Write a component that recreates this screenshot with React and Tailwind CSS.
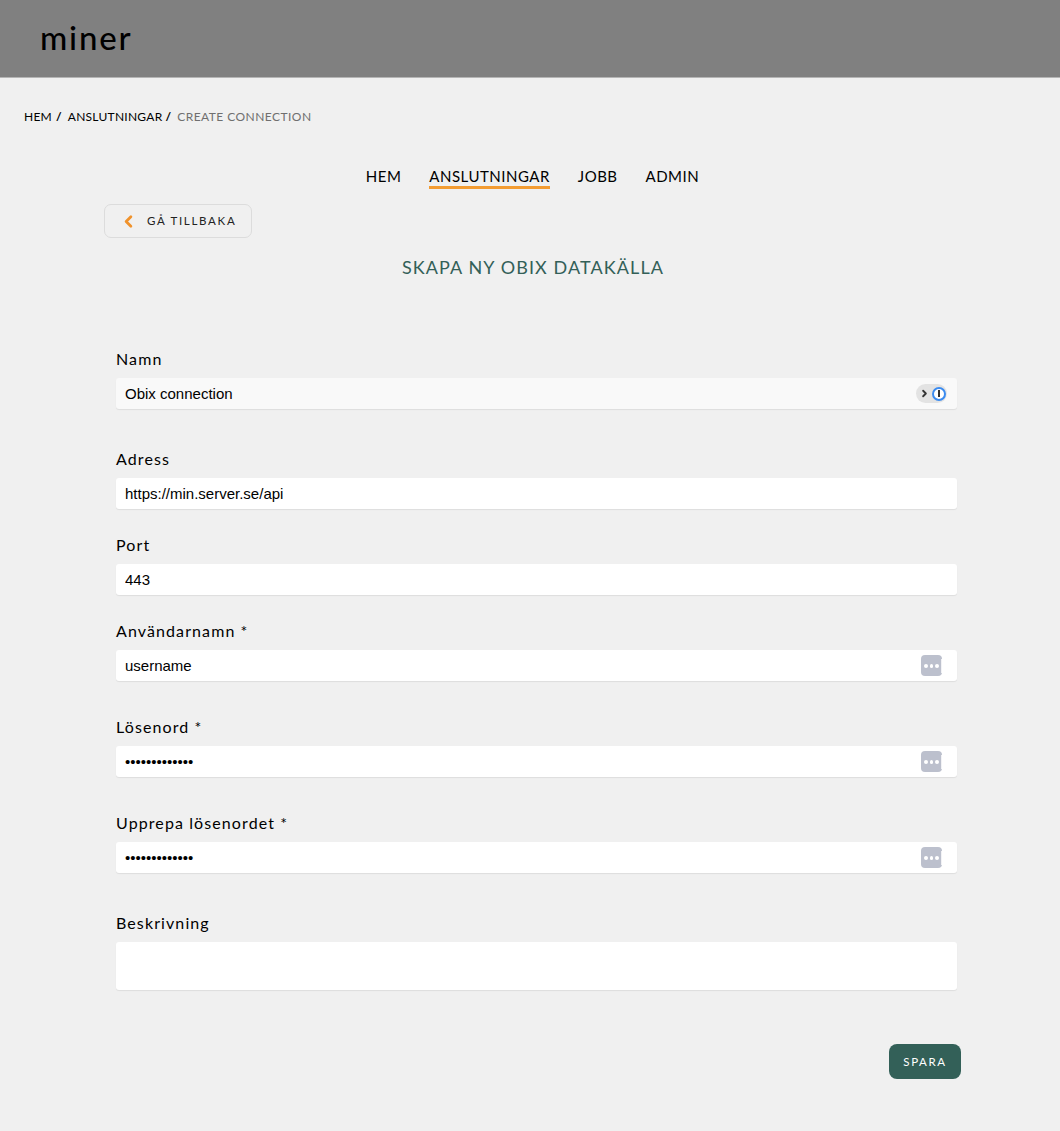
import { ChevronLeft, ChevronRight } from 'lucide-react'

const sans = "font-['Lato','Noto_Sans',sans-serif]"

function PasswordKey() {
  return (
    <span className="absolute right-[15px] top-[5px] flex h-[21px] w-[21px] items-center gap-[2px] rounded-[4px] bg-[#bcc0cd] pl-[3px]">
      <span className="h-1 w-1 rounded-full bg-white" />
      <span className="h-1 w-1 rounded-full bg-white" />
      <span className="h-1 w-1 rounded-full bg-white" />
      <span className="h-[14px] w-[1px] bg-white/80" />
    </span>
  )
}

function OnePassword() {
  return (
    <span className="absolute right-[10px] top-[6px] flex h-[19px] w-[31px] items-center rounded-full bg-[#e3e3e3] pl-[3px]">
      <ChevronRight size={11} strokeWidth={4} className="text-[#333]" />
      <span className="ml-[2px] flex h-[14px] w-[14px] items-center justify-center rounded-full border-2 border-[#3b8bf0] bg-white">
        <span className="h-[7px] w-[2px] bg-[#333]" />
      </span>
    </span>
  )
}

function Field({ label, value, type = 'text', filled, keyIcon, onePass, className }) {
  return (
    <div className={className}>
      <label className="block h-[18px] text-[16px] leading-4 tracking-[1.1px] text-black">{label}</label>
      <div className="relative mt-[9px]">
        <input
          type={type}
          readOnly
          value={value}
          className={`block h-[31px] w-full rounded-[3px] pl-[9px] pr-10 font-['Liberation_Sans',Arial,sans-serif] text-[15px] text-black shadow-[0_1px_1px_rgba(0,0,0,0.08)] outline-none ${filled ? 'bg-[#f9f9f9]' : 'bg-white'}`}
        />
        {keyIcon && <PasswordKey />}
        {onePass && <OnePassword />}
      </div>
    </div>
  )
}

export default function App() {
  return (
    <div className={`min-h-[1131px] bg-[#f0f0f0] ${sans} text-black`}>
      <header className="flex h-[78px] items-center border-b border-[#b5b5b5] bg-[#808080] pb-[3px] pl-10">
        <span className="text-[33px] font-medium leading-none tracking-[1.8px] text-black">miner</span>
      </header>

      <nav className="mt-[31px] flex h-[16px] items-center pl-6 text-[12px] leading-4 tracking-[0.25px] text-black">
        <span>HEM</span>
        <span className="ml-1 font-bold">/</span>
        <span className="ml-[6px]">ANSLUTNINGAR</span>
        <span className="ml-[3px] font-bold">/</span>
        <span className="ml-[6px] tracking-[0.45px] text-[#6f6f6f]">CREATE CONNECTION</span>
      </nav>

      <div className="mt-[41px] flex h-[20px] justify-center gap-7 pl-[5px] text-[15px] leading-[20px] tracking-[0.5px]">
        <a>HEM</a>
        <a className="h-[23px] border-b-[3px] border-[#f39c32]">ANSLUTNINGAR</a>
        <a>JOBB</a>
        <a>ADMIN</a>
      </div>

      <div className="ml-[104px] mt-[18px]">
        <button className="flex h-[34px] w-[148px] items-center rounded-[7px] border border-[#dcdcdc] pl-[14px] text-[11.5px] tracking-[1.7px] text-[#222]">
          <ChevronLeft size={19} strokeWidth={3.5} className="text-[#f0922b]" />
          <span className="ml-[9px]">GÅ TILLBAKA</span>
        </button>
      </div>

      <h1 className="mt-[18px] pl-[6px] text-center text-[18px] leading-[22px] tracking-[1.1px] text-[#336058]">SKAPA NY OBIX DATAKÄLLA</h1>

      <form className="ml-[116px] mt-[73px] w-[841px]">
        <Field label="Namn" value="Obix connection" filled onePass />
        <Field className="mt-[42px]" label="Adress" value="https://min.server.se/api" />
        <Field className="mt-[28px]" label="Port" value="443" />
        <Field className="mt-[28px]" label="Användarnamn *" value="username" keyIcon />
        <Field className="mt-[38px]" label="Lösenord *" value="password12345" type="password" keyIcon />
        <Field className="mt-[38px]" label="Upprepa lösenordet *" value="password12345" type="password" keyIcon />
        <div className="mt-[42px]">
          <label className="block h-[18px] text-[16px] leading-4 tracking-[1.1px]">Beskrivning</label>
          <div className="mt-[9px] h-[48px] rounded-[3px] bg-white shadow-[0_1px_1px_rgba(0,0,0,0.08)]" />
        </div>
        <div className="mt-[54px] flex justify-end">
          <button type="button" className="mr-[-4px] h-[35px] w-[72px] rounded-[8px] bg-[#336058] text-[11.5px] tracking-[1.6px] text-white">SPARA</button>
        </div>
      </form>
    </div>
  )
}
